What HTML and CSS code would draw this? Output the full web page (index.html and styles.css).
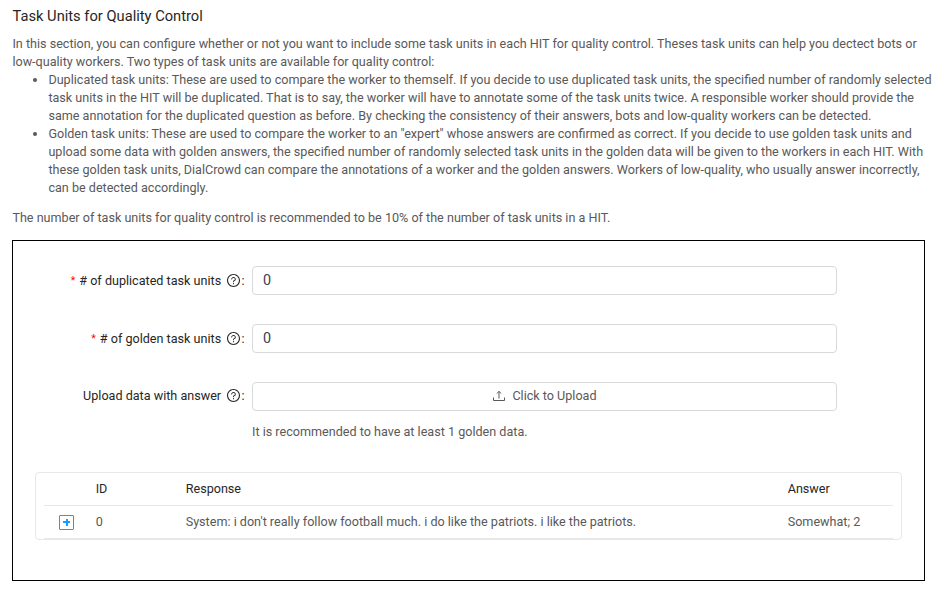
FILE: index.html
```html
<!DOCTYPE html>
<html lang="en">
<head>
<meta charset="utf-8">
<title>Task Units for Quality Control</title>
<link rel="stylesheet" href="styles.css">
</head>
<body>
<svg class="defs" width="0" height="0" aria-hidden="true">
  <symbol id="help" viewBox="64 64 896 896">
    <path d="M512 64C264.600 64 64 264.600 64 512s200.600 448 448 448 448-200.600 448-448S759.400 64 512 64zm0 820c-205.400 0-372-166.600-372-372s166.600-372 372-372 372 166.600 372 372-166.600 372-372 372z"/>
    <path d="M623.600 316.700C593.600 290.400 554 276 512 276s-81.600 14.500-111.600 40.700C369.200 344 352 380.700 352 420v7.600c0 4.400 3.600 8 8 8h48c4.400 0 8-3.600 8-8V420c0-44.100 43.100-80 96-80s96 35.900 96 80c0 31.100-22 59.600-56.100 72.700-21.200 8.100-39.200 22.300-52.100 40.900-13.100 19-19.900 41.800-19.900 64.900V620c0 4.400 3.600 8 8 8h48c4.400 0 8-3.600 8-8v-22.700a48.300 48.300 0 0 1 30.900-44.800c59-22.700 97.100-74.700 97.100-132.500.1-39.300-17.100-76-48.300-103.300zM472 732a40 40 0 1 0 80 0 40 40 0 1 0-80 0z"/>
  </symbol>
</svg>
<main class="page">
  <h1 class="title">Task Units for Quality Control</h1>
  <p class="intro">In this section, you can configure whether or not you want to include some task units in each HIT for quality control. Theses task units can help you dectect bots or<br>low-quality workers. Two types of task units are available for quality control:</p>
  <ul class="types">
    <li>Duplicated task units: These are used to compare the worker to themself. If you decide to use duplicated task units, the specified number of randomly selected<br>task units in the HIT will be duplicated. That is to say, the worker will have to annotate some of the task units twice. A responsible worker should provide the<br>same annotation for the duplicated question as before. By checking the consistency of their answers, bots and low-quality workers can be detected.</li>
    <li>Golden task units: These are used to compare the worker to an "expert" whose answers are confirmed as correct. If you decide to use golden task units and<br>upload some data with golden answers, the specified number of randomly selected task units in the golden data will be given to the workers in each HIT. With<br>these golden task units, DialCrowd can compare the annotations of a worker and the golden answers. Workers of low-quality, who usually answer incorrectly,<br>can be detected accordingly.</li>
  </ul>
  <p class="note">The number of task units for quality control is recommended to be 10% of the number of task units in a HIT.</p>
  <section class="panel">
    <div class="row">
      <label class="label" for="dup"><span class="required">*</span># of duplicated task units <svg class="help"><use href="#help"/></svg>:</label>
      <input class="field" id="dup" value="0">
    </div>
    <div class="row">
      <label class="label" for="gold"><span class="required">*</span># of golden task units <svg class="help"><use href="#help"/></svg>:</label>
      <input class="field" id="gold" value="0">
    </div>
    <div class="row row-upload">
      <span class="label">Upload data with answer <svg class="help"><use href="#help"/></svg>:</span>
      <button class="field upload" type="button">
        <svg class="upload-icon" viewBox="0 0 12 12"><path d="M.5 7.500v3h11v-3M6 8.500V1.500M4 3.500 6 1.300 8 3.500"/></svg>
        <span>Click to Upload</span>
      </button>
    </div>
    <p class="hint">It is recommended to have at least 1 golden data.</p>
    <div class="table">
      <div class="tr th"><span></span><span>ID</span><span>Response</span><span>Answer</span></div>
      <div class="tr"><span class="expand" role="button" aria-label="Expand row"></span><span>0</span><span>System: i don't really follow football much. i do like the patriots. i like the patriots.</span><span>Somewhat; 2</span></div>
    </div>
  </section>
</main>
</body>
</html>
```
FILE: styles.css
```css
* { box-sizing: border-box; }
body {
  margin: 0;
  background: #fff;
  color: #595959;
  font: 12.6px/18px Roboto, sans-serif;
}
.defs { position: absolute; }
.page { padding: 5px 0 0 12px; }
.title {
  margin: 0 0 8px;
  padding-left: 0.5px;
  color: #262626;
  font-size: 14.7px;
  font-weight: 400;
  line-height: 22px;
}
p { margin: 0; }
.intro, .types, .note { padding-left: 0.4px; white-space: nowrap; }
.types { margin: 0 0 12px; padding-left: 36.4px; }
.panel {
  width: 913px;
  height: 341px;
  margin-top: 13px;
  padding: 25px 22px 0;
  border: 1px solid #000;
}
.row { display: flex; align-items: center; height: 29px; margin-bottom: 29px; }
.row-upload { margin-bottom: 0; }
.label {
  display: flex;
  align-items: center;
  justify-content: flex-end;
  width: 209.600px;
  margin-right: 7.400px;
  color: #262626;
  white-space: nowrap;
}
.row-upload .label { padding-bottom: 2px; }
.required {
  margin-right: 4px;
  color: #f00;
  font-size: 10.5px;
}
.help { width: 13px; height: 13px; margin-left: 6px; margin-right: 1.400px; fill: #262626; }
.field {
  width: 585px;
  height: 29px;
  padding: 0 10px;
  border: 1px solid #d9d9d9;
  border-radius: 4px;
  background: #fff;
  color: #40404f;
  font: 14.4px/27px Roboto, sans-serif;
  outline: 0;
}
.upload {
  display: flex;
  align-items: center;
  justify-content: center;
  gap: 7px;
  padding: 0 9px 2px 10px;
  color: #595959;
  font-size: 12.6px;
  line-height: 18px;
}
.upload-icon { width: 12px; height: 12px; fill: none; stroke: #595959; }
.hint { margin: 12px 0 0 217px; }
.table {
  width: 867px;
  height: 68px;
  margin-top: 31px;
  padding: 0 8px;
  border: 1px solid #e8e8e8;
  border-radius: 4px;
}
.tr {
  display: grid;
  grid-template-columns: 51.700px 90px 602px 1fr;
  align-items: center;
  height: 33px;
  border-bottom: 1px solid #e8e8e8;
}
.th { color: #262626; }
.expand {
  width: 15px;
  height: 15px;
  margin-left: 15px;
  border: 1px solid #1a9cff;
  border-radius: 1px;
  background:
    linear-gradient(#1a9cff, #1a9cff) 3px 5px / 7px 2px no-repeat,
    linear-gradient(#1a9cff, #1a9cff) 5.500px 3px / 2px 7px no-repeat;
}
```
